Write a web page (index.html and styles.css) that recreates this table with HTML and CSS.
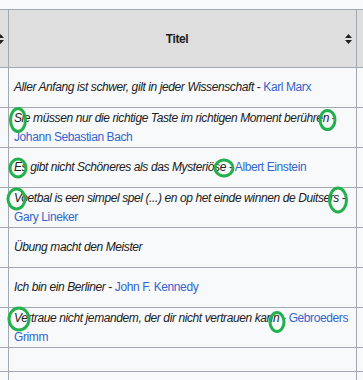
FILE: index.html
```html
<!DOCTYPE html>
<html lang="de">
<head>
<meta charset="utf-8">
<link rel="stylesheet" href="styles.css">
</head>
<body>
<div class="table">
  <div class="row head">
    <div class="cell c1"><div class="hcell"><span class="htitle"></span><svg class="sort" width="7" height="10" viewBox="0 0 7 10"><polygon points="0,4 3.5,0 7,4"/><polygon points="0,6 3.5,10 7,6"/></svg></div></div>
    <div class="cell c2"><div class="hcell"><span class="htitle">Titel</span><svg class="sort" width="7" height="10" viewBox="0 0 7 10"><polygon points="0,4 3.5,0 7,4"/><polygon points="0,6 3.5,10 7,6"/></svg></div></div>
    <div class="cell c3"></div>
  </div>
  <div class="row">
    <div class="cell c1"></div>
    <div class="cell c2"><div class="txt"><i>Aller Anfang ist schwer, gilt in jeder Wissenschaft</i> - <a href="#">Karl Marx</a></div></div>
    <div class="cell c3"></div>
  </div>
  <div class="row">
    <div class="cell c1"></div>
    <div class="cell c2"><div class="txt"><i>Sie müssen nur die richtige Taste im richtigen Moment berühren</i> - <a href="#">Johann Sebastian Bach</a></div></div>
    <div class="cell c3"></div>
  </div>
  <div class="row">
    <div class="cell c1"></div>
    <div class="cell c2"><div class="txt"><i>Es gibt nicht Schöneres als das Mysteriöse</i> - <a href="#">Albert Einstein</a></div></div>
    <div class="cell c3"></div>
  </div>
  <div class="row">
    <div class="cell c1"></div>
    <div class="cell c2"><div class="txt"><i>Voetbal is een simpel spel (...) en op het einde winnen de Duitsers</i> - <a href="#">Gary Lineker</a></div></div>
    <div class="cell c3"></div>
  </div>
  <div class="row">
    <div class="cell c1"></div>
    <div class="cell c2"><div class="txt"><i>Übung macht den Meister</i></div></div>
    <div class="cell c3"></div>
  </div>
  <div class="row">
    <div class="cell c1"></div>
    <div class="cell c2"><div class="txt"><i>Ich bin ein Berliner</i> - <a href="#">John F. Kennedy</a></div></div>
    <div class="cell c3"></div>
  </div>
  <div class="row">
    <div class="cell c1"></div>
    <div class="cell c2"><div class="txt"><i>Vertraue nicht jemandem, der dir nicht vertrauen kann</i> - <a href="#">Gebroeders Grimm</a></div></div>
    <div class="cell c3"></div>
  </div>
  <div class="row short">
    <div class="cell c1"></div>
    <div class="cell c2"></div>
    <div class="cell c3"></div>
  </div>
  <div class="row">
    <div class="cell c1"></div>
    <div class="cell c2"></div>
    <div class="cell c3"></div>
  </div>
</div>
<svg class="marks" width="363" height="380" viewBox="0 0 363 380">
  <ellipse cx="18" cy="120" rx="7.5" ry="11.5"/>
  <ellipse cx="327.5" cy="120" rx="7.5" ry="9.5"/>
  <ellipse cx="18" cy="168" rx="8" ry="9"/>
  <ellipse cx="224" cy="168" rx="9" ry="8"/>
  <ellipse cx="16.5" cy="199" rx="8.5" ry="10"/>
  <ellipse cx="338" cy="200" rx="8.5" ry="12"/>
  <ellipse cx="19" cy="319" rx="10" ry="11"/>
  <ellipse cx="277" cy="322" rx="7" ry="9.5"/>
</svg>
</body>
</html>
```
FILE: styles.css
```css
html, body {
  margin: 0;
  padding: 0;
  overflow: hidden;
  background: #f8f9fa;
}
body {
  position: relative;
  width: 363px;
  height: 380px;
  font-family: "Liberation Sans", Arial, sans-serif;
  font-size: 12px;
  letter-spacing: -0.4px;
  color: #202122;
}
.table {
  margin-top: 9px;
  border-top: 1px solid #a2a9b1;
}
.row {
  display: grid;
  grid-template-columns: 9px 348px 60px;
  height: 40px;
}
.row.head {
  height: 58px;
  background: #dedede;
}
.row.short {
  height: 24px;
}
.cell {
  box-sizing: border-box;
  border-bottom: 1px solid #a2a9b1;
  display: flex;
  align-items: center;
  min-width: 0;
}
.c1, .c2 {
  border-right: 1px solid #a2a9b1;
}
.c2 {
  padding: 0 4px 0 5px;
}
.c1 {
  padding: 0 4px 0 0;
}
.hcell {
  display: flex;
  align-items: center;
  justify-content: flex-end;
  width: 100%;
  min-width: 0;
  font-weight: bold;
}
.htitle {
  flex: 1;
  text-align: center;
}
.c1 .htitle {
  display: none;
}
.sort {
  flex-shrink: 0;
  margin-left: 5px;
  fill: #202122;
  display: block;
}
.c1 .sort {
  margin-left: 0;
}
.txt {
  line-height: 19px;
  width: 100%;
}
.txt a {
  color: #3366cc;
  text-decoration: none;
}
.marks {
  position: absolute;
  left: 0;
  top: 0;
  pointer-events: none;
  fill: none;
  stroke: #22b14c;
  stroke-width: 3;
}
```
